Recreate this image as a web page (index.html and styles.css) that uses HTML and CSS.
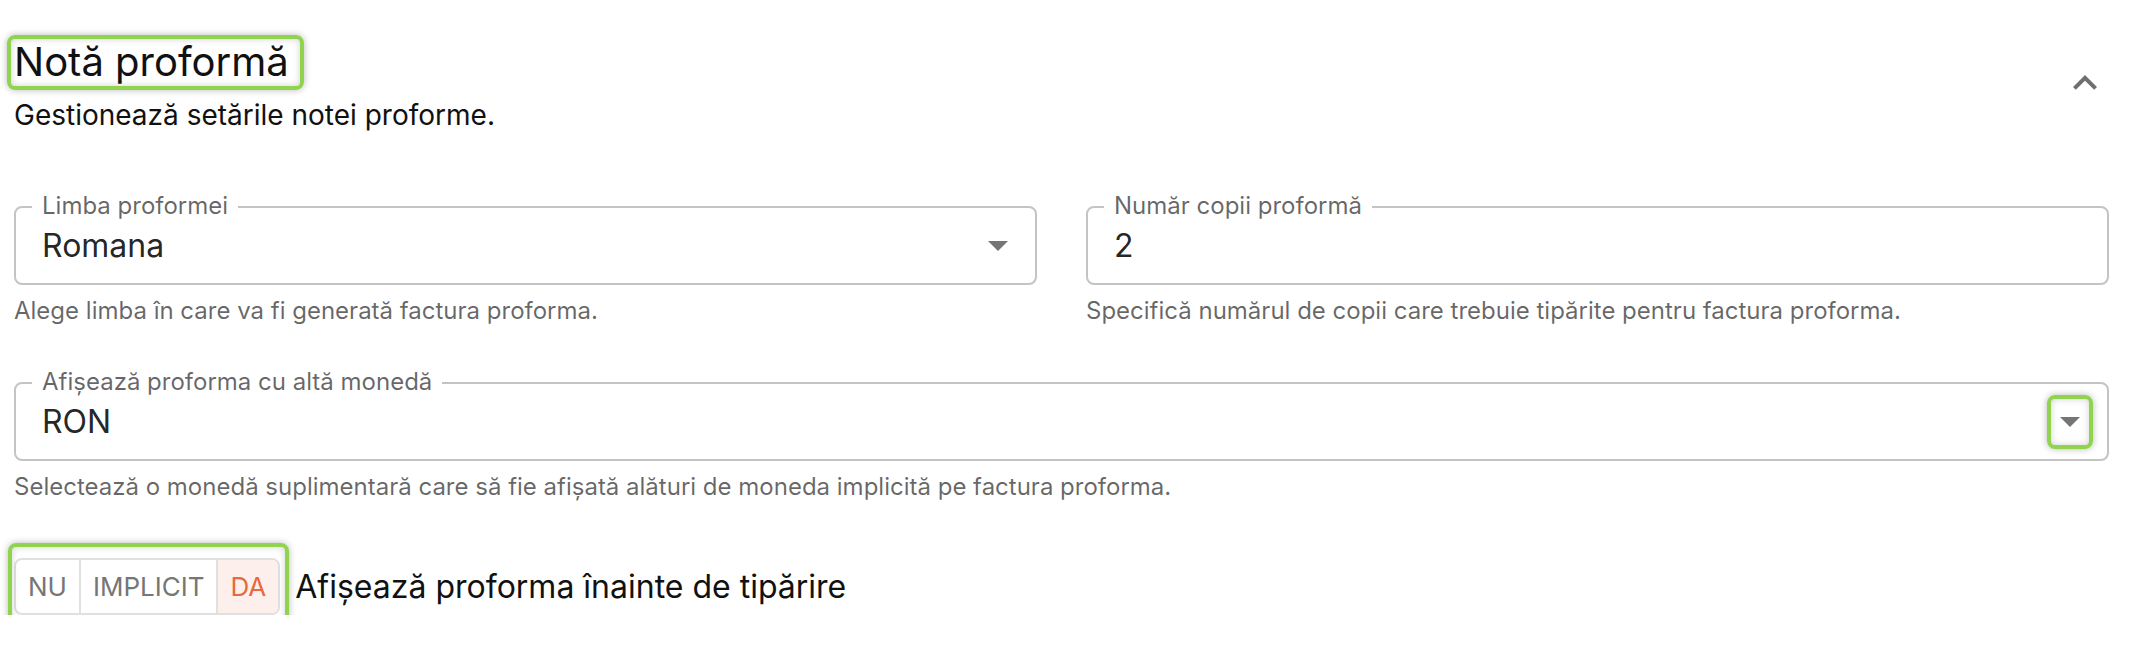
FILE: index.html
```html
<!DOCTYPE html>
<html lang="ro">
<head>
<meta charset="utf-8">
<title>Notă proformă</title>
<link rel="stylesheet" href="styles.css">
</head>
<body>
<div class="page">
  <div class="header">
    <div class="header-text">
      <h2 class="title hl hl-title">Notă proformă</h2>
      <p class="subtitle">Gestionează setările notei proforme.</p>
    </div>
    <span class="collapse-icon" aria-label="Restrânge">
      <svg width="48" height="48" viewBox="0 0 24 24"><path d="M12 8l-6 6 1.41 1.41L12 10.83l4.59 4.58L18 14z"/></svg>
    </span>
  </div>

  <div class="form-grid">
    <div class="form-item">
      <div class="field">
        <span class="field-label">Limba proformei</span>
        <span class="field-value">Romana</span>
        <span class="select-icon">
          <svg width="20" height="10" viewBox="7 10 10 5"><path d="M7 10l5 5 5-5z"/></svg>
        </span>
      </div>
      <p class="helper">Alege limba în care va fi generată factura proforma.</p>
    </div>

    <div class="form-item">
      <div class="field">
        <span class="field-label">Număr copii proformă</span>
        <span class="field-value">2</span>
      </div>
      <p class="helper">Specifică numărul de copii care trebuie tipărite pentru factura proforma.</p>
    </div>

    <div class="form-item full">
      <div class="field">
        <span class="field-label">Afișează proforma cu altă monedă</span>
        <span class="field-value">RON</span>
        <span class="select-icon hl hl-icon">
          <svg width="20" height="10" viewBox="7 10 10 5"><path d="M7 10l5 5 5-5z"/></svg>
        </span>
      </div>
      <p class="helper">Selectează o monedă suplimentară care să fie afișată alături de moneda implicită pe factura proforma.</p>
    </div>

    <div class="form-item full toggle-row">
      <div class="toggle-group hl hl-toggle">
        <span class="toggle">NU</span>
        <span class="toggle">IMPLICIT</span>
        <span class="toggle selected">DA</span>
      </div>
      <span class="toggle-label">Afișează proforma înainte de tipărire</span>
    </div>
  </div>
</div>
</body>
</html>
```

FILE: styles.css
```css
* { box-sizing: border-box; }

body {
  margin: 0;
  background: #ffffff;
  font-family: Inter, "Noto Sans", "Liberation Sans", sans-serif;
  color: rgba(0, 0, 0, 0.87);
}

.page {
  padding: 38px 32px 0 14px;
}

.header {
  display: flex;
  justify-content: space-between;
  align-items: flex-start;
}

.header-text {
  display: flex;
  flex-direction: column;
  align-items: flex-start;
}

.title {
  margin: 0;
  font-size: 40px;
  line-height: 48px;
  font-weight: 400;
  color: #111111;
  display: inline-block;
}

.subtitle {
  margin: 9px 0 0;
  font-size: 28px;
  line-height: 40px;
  color: #111111;
}

.collapse-icon {
  margin-top: 21px;
  width: 48px;
  height: 48px;
  display: flex;
}

.collapse-icon svg { fill: #6f6f6f; }

/* highlight annotation */
.hl { position: relative; }
.hl::after {
  content: "";
  position: absolute;
  border: 4px solid #8fd34f;
  border-radius: 8px;
  box-shadow: 0 0 7px rgba(0, 0, 0, 0.28), inset 0 0 7px rgba(0, 0, 0, 0.18);
  pointer-events: none;
}
.hl-title::after { top: -3px; bottom: -4px; left: -7px; right: -15px; }
.hl-icon::after { inset: 0; }
.hl-toggle::after { top: -17px; bottom: -13px; left: -8px; right: -11px; }

.form-grid {
  margin-top: 71px;
  display: grid;
  grid-template-columns: 1fr 1fr;
  column-gap: 49px;
  row-gap: 51px;
}

.form-item.full { grid-column: 1 / -1; }

.field {
  position: relative;
  height: 79px;
  border: 2px solid #c4c4c4;
  border-radius: 8px;
  display: flex;
  align-items: center;
  padding-left: 26px;
}

.field-label {
  position: absolute;
  top: -14px;
  left: 16px;
  padding: 0 10px;
  background: #ffffff;
  font-size: 24px;
  line-height: 24px;
  color: rgba(0, 0, 0, 0.6);
  white-space: nowrap;
}

.field-value {
  flex: 1;
  font-size: 32px;
  line-height: 46px;
  color: rgba(0, 0, 0, 0.87);
}

.select-icon {
  width: 46px;
  height: 54px;
  margin-right: 14px;
  display: flex;
  align-items: center;
  justify-content: center;
}

.select-icon svg { fill: #757575; }

.helper {
  margin: 6px 0 0;
  font-size: 24px;
  line-height: 40px;
  color: rgba(0, 0, 0, 0.6);
}

.toggle-row {
  display: flex;
  align-items: center;
  gap: 15px;
}

.toggle-group {
  display: inline-flex;
  height: 57px;
  border: 2px solid #e0e0e0;
  border-radius: 8px;
}

.toggle {
  display: flex;
  align-items: center;
  padding: 0 12px;
  font-size: 26px;
  font-weight: 400;
  color: #767676;
  text-transform: uppercase;
}

.toggle + .toggle { border-left: 2px solid #e0e0e0; }

.toggle.selected {
  color: #e8683f;
  background: #fdf0ec;
  border-radius: 0 6px 6px 0;
}

.toggle-label {
  font-size: 32px;
  line-height: 40px;
  color: #111111;
}
```
